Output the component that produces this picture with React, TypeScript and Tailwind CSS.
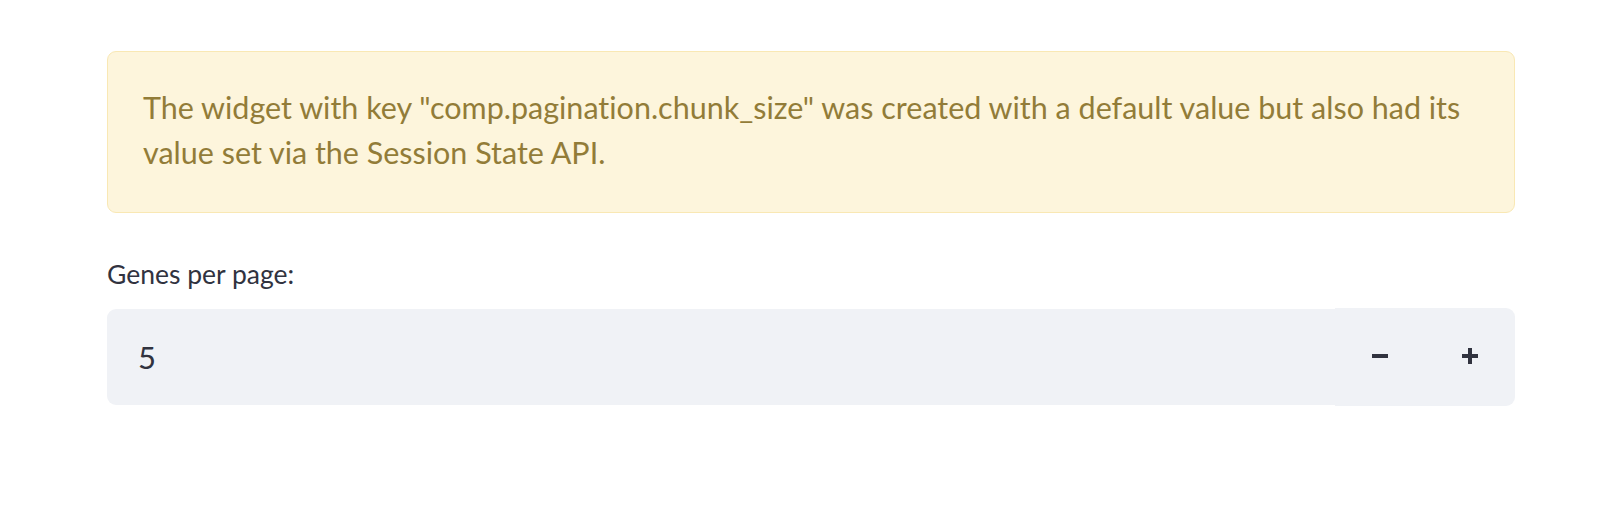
import React, { useState } from 'react';

function StepIcon({ kind }: { kind: 'minus' | 'plus' }) {
  return (
    <svg width="16" height="16" viewBox="0 0 16 16" className="mb-[2px]">
      <rect x="0" y="6" width="16" height="4" fill="#31333f" />
      {kind === 'plus' && <rect x="6" y="0" width="4" height="16" fill="#31333f" />}
    </svg>
  );
}

export default function App() {
  const [value, setValue] = useState(5);

  return (
    <div
      className="min-h-[518px] bg-white pt-[51px] pl-[107px] [font-variant-ligatures:none]"
      style={{ fontFamily: 'Lato, "Noto Sans", sans-serif' }}
    >
      <div className="w-[1408px]">
        {/* Warning */}
        <div className="rounded-[9px] border border-[#f9e8b4] bg-[#fdf5dc] px-[35px] pt-[33px] pb-[37px]">
          <p className="text-[30.5px] leading-[45px] text-[#927c38]">
            The widget with key "comp.pagination.chunk_size" was created with a default value but also had its value set via the Session State API.
          </p>
        </div>

        {/* Number input */}
        <div className="mt-[41px]">
          <label className="block text-[26.5px] leading-[40px] text-[#31333f]">Genes per page:</label>
          <div className="mt-[14px] flex h-[98px]">
            <div className="my-px flex flex-1 items-center rounded-l-[9px] bg-[#f0f2f6] pl-[31px] text-[31px] text-[#31333f]">
              {value}
            </div>
            <button
              onClick={() => setValue((v) => Math.max(1, v - 1))}
              className="flex w-[90px] items-center justify-center bg-[#f0f2f6]"
            >
              <StepIcon kind="minus" />
            </button>
            <button
              onClick={() => setValue((v) => v + 1)}
              className="flex w-[90px] items-center justify-center rounded-r-[9px] bg-[#f0f2f6]"
            >
              <StepIcon kind="plus" />
            </button>
          </div>
        </div>
      </div>
    </div>
  );
}
